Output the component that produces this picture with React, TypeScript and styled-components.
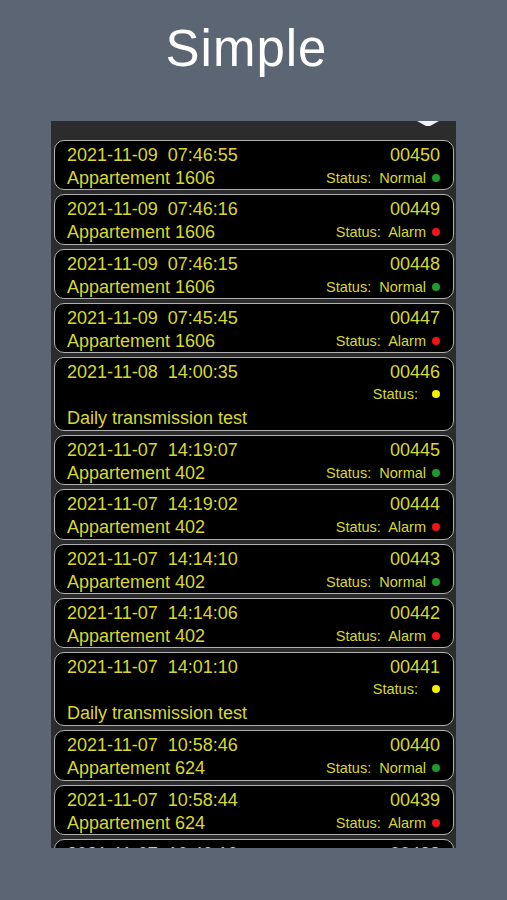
import React from "react";
import styled, { createGlobalStyle } from "styled-components";

type Tone = "normal" | "alarm" | "test";

interface Event {
  date: string;
  time: string;
  id: string;
  place: string;
  tone: Tone;
}

const events: Event[] = [
  { date: "2021-11-09", time: "07:46:55", id: "00450", place: "Appartement 1606", tone: "normal" },
  { date: "2021-11-09", time: "07:46:16", id: "00449", place: "Appartement 1606", tone: "alarm" },
  { date: "2021-11-09", time: "07:46:15", id: "00448", place: "Appartement 1606", tone: "normal" },
  { date: "2021-11-09", time: "07:45:45", id: "00447", place: "Appartement 1606", tone: "alarm" },
  { date: "2021-11-08", time: "14:00:35", id: "00446", place: "Daily transmission test", tone: "test" },
  { date: "2021-11-07", time: "14:19:07", id: "00445", place: "Appartement 402", tone: "normal" },
  { date: "2021-11-07", time: "14:19:02", id: "00444", place: "Appartement 402", tone: "alarm" },
  { date: "2021-11-07", time: "14:14:10", id: "00443", place: "Appartement 402", tone: "normal" },
  { date: "2021-11-07", time: "14:14:06", id: "00442", place: "Appartement 402", tone: "alarm" },
  { date: "2021-11-07", time: "14:01:10", id: "00441", place: "Daily transmission test", tone: "test" },
  { date: "2021-11-07", time: "10:58:46", id: "00440", place: "Appartement 624", tone: "normal" },
  { date: "2021-11-07", time: "10:58:44", id: "00439", place: "Appartement 624", tone: "alarm" },
  { date: "2021-11-07", time: "10:40:10", id: "00438", place: "Appartement 624", tone: "normal" },
];

const dotColours: Record<Tone, string> = {
  normal: "#1f9a2c",
  alarm: "#f01414",
  test: "#f2f200",
};

const labels: Record<Tone, string> = {
  normal: "Normal",
  alarm: "Alarm",
  test: "",
};

const GlobalStyle = createGlobalStyle`
  html, body {
    margin: 0;
    padding: 0;
    background: #5b6574;
    font-family: "Liberation Sans", Arial, sans-serif;
  }
`;

const Page = styled.div`
  width: 507px;
  height: 900px;
  display: flex;
  flex-direction: column;
  align-items: center;
  overflow: hidden;
`;

const Title = styled.h1`
  margin: 0;
  height: 121px;
  box-sizing: border-box;
  padding: 18px 14px 0 0;
  font-size: 51px;
  font-weight: 400;
  letter-spacing: 1px;
  color: #ffffff;
  line-height: 62px;
`;

const Screen = styled.div`
  width: 405px;
  height: 727px;
  background: #2c2c2d;
  overflow: hidden;
  display: flex;
  flex-direction: column;
`;

const StatusStrip = styled.div`
  height: 19px;
  flex: none;
  display: flex;
  justify-content: flex-end;
  align-items: flex-start;
  padding-right: 16px;
`;

const List = styled.div`
  display: flex;
  flex-direction: column;
  gap: 4px;
  padding: 0 2px 0 3px;
`;

const Card = styled.div<{ $tall: boolean }>`
  flex: none;
  height: ${(p) => (p.$tall ? 74 : 50.3)}px;
  box-sizing: border-box;
  background: #000;
  border: 1.5px solid #b0b0b0;
  border-radius: 10px;
  padding: 3px 13px 0 12px;
  display: flex;
  flex-direction: column;
  color: #d8d82c;
`;

const Row = styled.div<{ $end?: boolean }>`
  display: flex;
  justify-content: ${(p) => (p.$end ? "flex-end" : "space-between")};
  align-items: center;
`;

const Main = styled.span`
  font-size: 18px;
  line-height: 22px;
  white-space: pre;
`;

const Status = styled.span`
  display: flex;
  align-items: center;
  font-size: 14.5px;
  line-height: 22px;
  white-space: pre;
`;

const Dot = styled.span<{ $tone: Tone }>`
  width: 8px;
  height: 8px;
  border-radius: 50%;
  margin-left: 6px;
  background: ${(p) => dotColours[p.$tone]};
`;

const Spacer = styled.div`
  flex: 1;
`;

function EventCard({ e }: { e: Event }) {
  const tall = e.tone === "test";
  const status = (
    <Status>
      {tall ? "Status:  " : `Status:  ${labels[e.tone]}`}
      <Dot $tone={e.tone} />
    </Status>
  );
  return (
    <Card $tall={tall}>
      <Row>
        <Main>{`${e.date}  ${e.time}`}</Main>
        <Main>{e.id}</Main>
      </Row>
      {tall ? (
        <>
          <Row $end>{status}</Row>
          <Spacer />
          <Row style={{ marginBottom: 1 }}>
            <Main>{e.place}</Main>
          </Row>
        </>
      ) : (
        <Row style={{ marginTop: 1 }}>
          <Main>{e.place}</Main>
          {status}
        </Row>
      )}
    </Card>
  );
}

export default function App() {
  return (
    <Page>
      <GlobalStyle />
      <Title>Simple</Title>
      <Screen>
        <StatusStrip>
          <svg width="24" height="6" viewBox="0 0 24 6">
            <path d="M1 0 H23 L14 5 H10 Z" fill="#f2f2f2" />
          </svg>
        </StatusStrip>
        <List>
          {events.map((e) => (
            <EventCard key={e.id} e={e} />
          ))}
        </List>
      </Screen>
    </Page>
  );
}
